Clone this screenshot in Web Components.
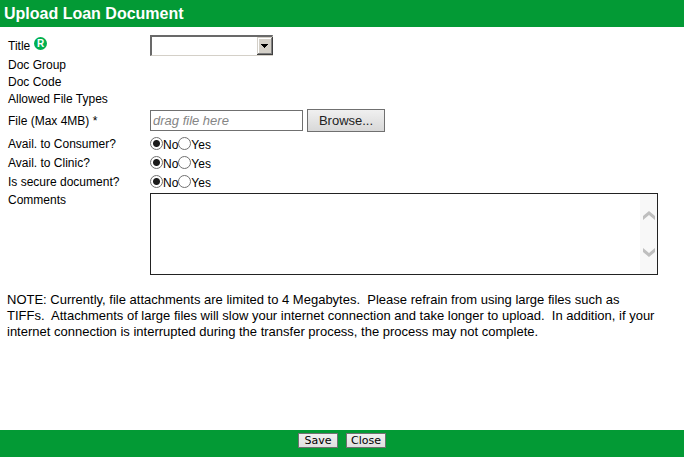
<!DOCTYPE html>
<html lang="en">
<head>
<meta charset="utf-8">
<title>Upload Loan Document</title>
<style>
  body { margin: 0; background: #fff; color: #000; font-family: "Liberation Sans", Arial, sans-serif; font-size: 12px; }
</style>
</head>
<body>
<upload-page></upload-page>

<template id="bar-template">
  <style>
    :host { display: block; background: #039a35; color: #fff; flex: none; }
    .inner { box-sizing: border-box; min-height: 27px; }
    :host([kind="title"]) .inner { padding: 4px; line-height: 19px; }
    :host([kind="actions"]) .inner { display: flex; justify-content: center; align-items: flex-start; gap: 8px; padding: 3px 0; }
  </style>
  <div class="inner"><slot></slot></div>
</template>

<template id="row-template">
  <style>
    :host { display: grid; grid-template-columns: 142px minmax(0, 1fr); align-items: center; min-height: 17px; line-height: 16px; }
    :host([size="choice"]) { min-height: 19px; }
    :host([size="area"]) { align-items: start; padding-top: 1px; }
    .name { display: flex; align-items: center; gap: 4px; }
  </style>
  <div class="name"><slot name="label"></slot></div>
  <div><slot></slot></div>
</template>

<template id="badge-template">
  <style>
    :host { display: block; width: 13px; height: 13px; margin-bottom: 4px; }
    span { display: block; border-radius: 50%; background: #00b050; color: #fff; font-size: 10px; font-weight: bold; line-height: 13px; text-align: center; }
  </style>
  <span title="Required">R</span>
</template>

<template id="page-template">
  <style>
    :host { display: flex; flex-direction: column; min-height: 100vh; }
    h1 { margin: 0; font-size: 16px; font-weight: bold; line-height: 19px; }
    form { display: flex; flex-direction: column; flex: 1; }
    main { flex: 1; }
    .fields { padding: 8px 26px 0 8px; }
    input, select, textarea, button { font-family: inherit; margin: 0; box-sizing: border-box; border-radius: 0; }
    .pick { position: relative; width: 123px; height: 21px; }
    select { appearance: none; display: block; width: 100%; height: 100%; background: #fff; border: solid; border-width: 2px 1px 1px 2px; border-color: #696969 #d4d0c8 #d4d0c8 #696969; padding: 0 20px 0 2px; font-size: 12px; }
    .pick svg { position: absolute; right: 0; top: 2px; pointer-events: none; }
    .file { display: flex; align-items: center; gap: 4px; padding: 2px 0; }
    .file input { width: 153px; height: 21px; border: 1px solid #707070; padding: 0 2px; font-size: 13px; font-style: italic; background: #fff; }
    .file input::placeholder { color: #858585; opacity: 1; }
    .file button { width: 78px; height: 23px; border: 1px solid #707070; background: linear-gradient(#f0f0f0, #d8d8d8); color: #222; font-size: 13px; padding: 0; }
    .choices { display: flex; align-items: center; }
    .choices label { padding-top: 2px; }
    input[type="radio"] { appearance: none; width: 13px; height: 13px; border: 1px solid #707070; border-radius: 50%; background: #fff; }
    input[type="radio"]:checked { background: radial-gradient(circle, #1c1c1c 3px, #fff 4px); }
    .area { position: relative; margin-top: 1px; }
    textarea { display: block; width: 100%; height: 82px; border: 1px solid #222; padding: 2px 20px 2px 2px; font-size: 12px; resize: none; background: #fff; }
    .area svg { position: absolute; right: 1px; top: 1px; pointer-events: none; }
    .note { margin: 0; padding: 17px 8px 0 7px; font-size: 13px; line-height: 16px; }
    .action { height: 15px; min-width: 40px; padding: 0 4px; border: 1px solid #707070; background: linear-gradient(#f0f0f0, #e0e0e0); color: #000; font: 11px/13px "DejaVu Sans", sans-serif; }
  </style>
  <page-bar kind="title"><h1>Upload Loan Document</h1></page-bar>
  <form>
    <main>
      <div class="fields">
        <field-row>
          <label slot="label" for="title">Title</label><required-badge slot="label"></required-badge>
          <div class="pick">
            <select id="title"><option></option></select>
            <svg width="16" height="18" viewBox="0 0 16 18" shape-rendering="crispEdges" aria-hidden="true">
              <path fill="#404040" d="M0 0h16v18H0z"/><path fill="#d4d0c8" d="M0 0h15v17H0z"/>
              <path fill="#808080" d="M1 1h14v16H1z"/><path fill="#fff" d="M1 1h13v15H1z"/><path fill="#d4d0c8" d="M2 2h12v14H2z"/>
              <path fill="#000" d="M4 7h7v1H4zM5 8h5v1H5zM6 9h3v1H6zM7 10h1v1H7z"/>
            </svg>
          </div>
        </field-row>
        <field-row><span slot="label">Doc Group</span></field-row>
        <field-row><span slot="label">Doc Code</span></field-row>
        <field-row><span slot="label">Allowed File Types</span></field-row>
        <field-row>
          <label slot="label" for="file">File (Max 4MB) *</label>
          <div class="file"><input id="file" type="text" placeholder="drag file here"><button type="button">Browse...</button></div>
        </field-row>
        <field-row size="choice">
          <span slot="label" id="consumer">Avail. to Consumer?</span>
          <div class="choices" role="radiogroup" aria-labelledby="consumer">
            <input type="radio" name="consumer" id="consumer-no" checked><label for="consumer-no">No</label><input type="radio" name="consumer" id="consumer-yes"><label for="consumer-yes">Yes</label>
          </div>
        </field-row>
        <field-row size="choice">
          <span slot="label" id="clinic">Avail. to Clinic?</span>
          <div class="choices" role="radiogroup" aria-labelledby="clinic">
            <input type="radio" name="clinic" id="clinic-no" checked><label for="clinic-no">No</label><input type="radio" name="clinic" id="clinic-yes"><label for="clinic-yes">Yes</label>
          </div>
        </field-row>
        <field-row size="choice">
          <span slot="label" id="secure">Is secure document?</span>
          <div class="choices" role="radiogroup" aria-labelledby="secure">
            <input type="radio" name="secure" id="secure-no" checked><label for="secure-no">No</label><input type="radio" name="secure" id="secure-yes"><label for="secure-yes">Yes</label>
          </div>
        </field-row>
        <field-row size="area">
          <label slot="label" for="comments">Comments</label>
          <div class="area">
            <textarea id="comments"></textarea>
            <svg width="17" height="80" viewBox="0 0 17 80" aria-hidden="true">
              <path fill="#f8f8f8" d="M0 0h17v80H0z"/>
              <path fill="#bfbfbf" d="M3 22 9 17 15 22V26L9 21 3 26z M3 54 9 59 15 54V58L9 63 3 58z"/>
            </svg>
          </div>
        </field-row>
      </div>
      <p class="note">NOTE: Currently, file attachments are limited to 4 Megabytes.&nbsp; Please refrain from using large files such as<br>TIFFs.&nbsp; Attachments of large files will slow your internet connection and take longer to upload.&nbsp; In addition, if your<br>internet connection is interrupted during the transfer process, the process may not complete.</p>
    </main>
    <page-bar kind="actions"><button type="button" class="action">Save</button><button type="button" class="action">Close</button></page-bar>
  </form>
</template>

<script>
  class TemplateElement extends HTMLElement {
    constructor() {
      super();
      const template = document.getElementById(this.constructor.templateId);
      this.attachShadow({ mode: "open" }).append(template.content.cloneNode(true));
    }
  }
  class PageBar extends TemplateElement { static templateId = "bar-template"; }
  class FieldRow extends TemplateElement { static templateId = "row-template"; }
  class RequiredBadge extends TemplateElement { static templateId = "badge-template"; }
  class UploadPage extends TemplateElement { static templateId = "page-template"; }
  customElements.define("page-bar", PageBar);
  customElements.define("field-row", FieldRow);
  customElements.define("required-badge", RequiredBadge);
  customElements.define("upload-page", UploadPage);
</script>
</body>
</html>
